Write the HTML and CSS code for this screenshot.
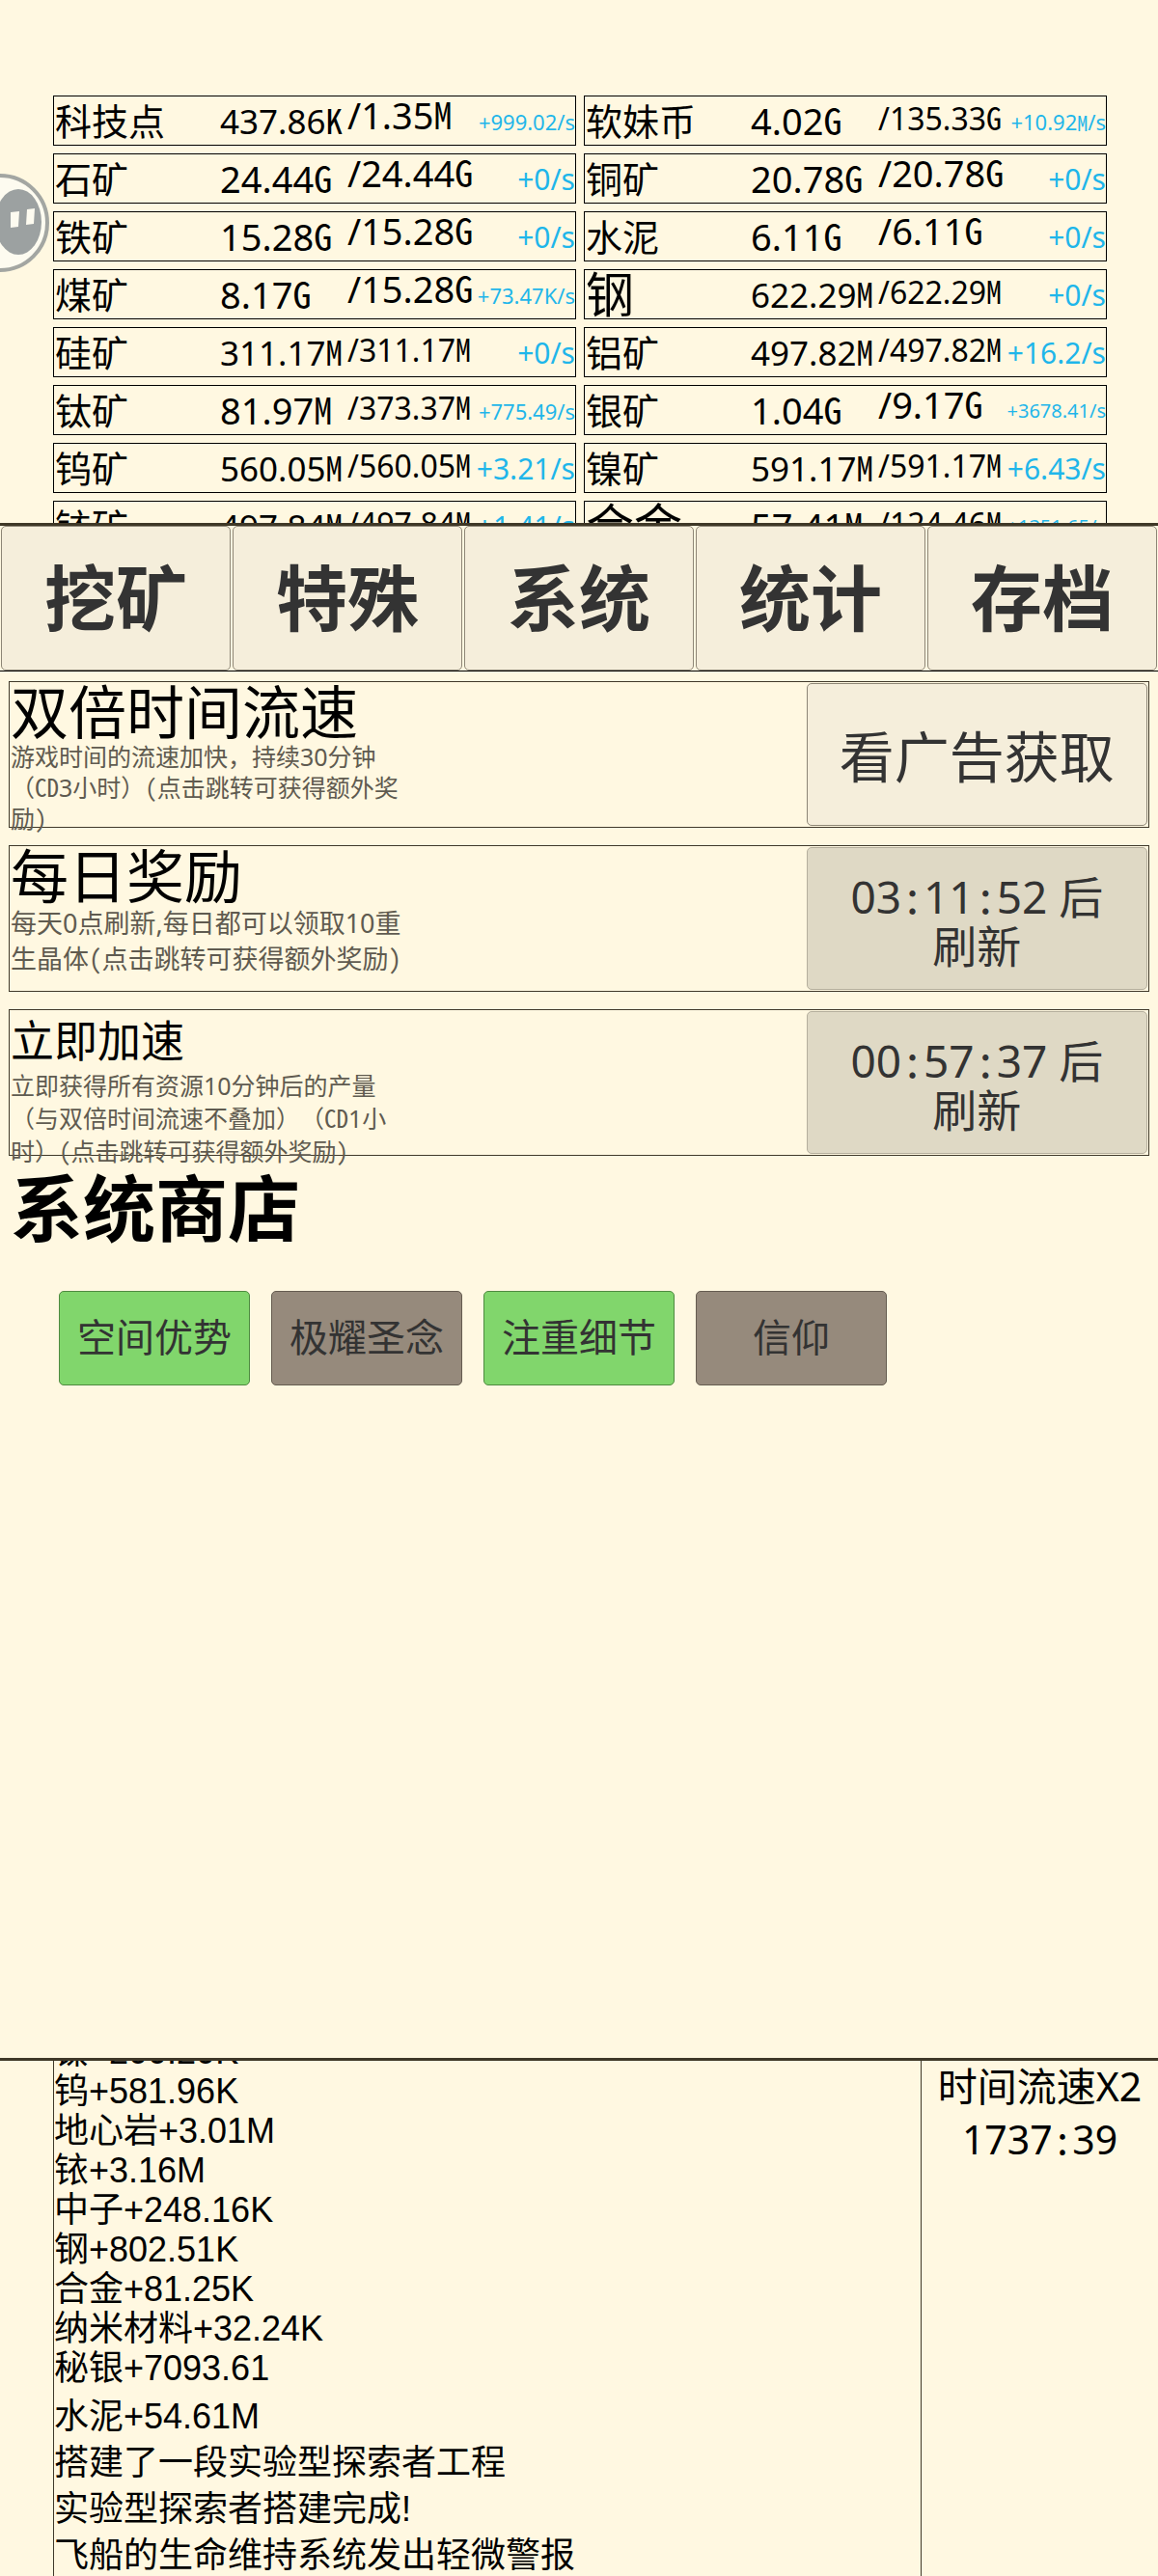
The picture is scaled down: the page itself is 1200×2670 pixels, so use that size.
FILE: index.html
```html
<!DOCTYPE html>
<html lang="zh-CN">
<head>
<meta charset="UTF-8">
<meta name="viewport" content="width=device-width, initial-scale=1">
<title>挖矿</title>
<link rel="stylesheet" href="styles.css">
</head>
<body>

<!-- 资源列表 -->
<section class="resources">
<div class="res-grid">
<div class="res"><span class="name">科技点</span><span class="val long">437.86<i>K</i></span><span class="cap">/1.35<i>M</i></span><span class="rate s">+999.02/s</span></div>
<div class="res"><span class="name">软妹币</span><span class="val">4.02<i>G</i></span><span class="cap long">/135.33<i>G</i></span><span class="rate s">+10.92<i>M</i>/s</span></div>
<div class="res"><span class="name">石矿</span><span class="val">24.44<i>G</i></span><span class="cap">/24.44<i>G</i></span><span class="rate">+0/s</span></div>
<div class="res"><span class="name">铜矿</span><span class="val">20.78<i>G</i></span><span class="cap">/20.78<i>G</i></span><span class="rate">+0/s</span></div>
<div class="res"><span class="name">铁矿</span><span class="val">15.28<i>G</i></span><span class="cap">/15.28<i>G</i></span><span class="rate">+0/s</span></div>
<div class="res"><span class="name">水泥</span><span class="val">6.11<i>G</i></span><span class="cap">/6.11<i>G</i></span><span class="rate">+0/s</span></div>
<div class="res"><span class="name">煤矿</span><span class="val">8.17<i>G</i></span><span class="cap">/15.28<i>G</i></span><span class="rate s">+73.47K/s</span></div>
<div class="res"><span class="name big">钢</span><span class="val long">622.29<i>M</i></span><span class="cap long">/622.29<i>M</i></span><span class="rate">+0/s</span></div>
<div class="res"><span class="name">硅矿</span><span class="val long">311.17<i>M</i></span><span class="cap long">/311.17<i>M</i></span><span class="rate">+0/s</span></div>
<div class="res"><span class="name">铝矿</span><span class="val long">497.82<i>M</i></span><span class="cap long">/497.82<i>M</i></span><span class="rate">+16.2/s</span></div>
<div class="res"><span class="name">钛矿</span><span class="val">81.97<i>M</i></span><span class="cap long">/373.37<i>M</i></span><span class="rate s">+775.49/s</span></div>
<div class="res"><span class="name">银矿</span><span class="val">1.04<i>G</i></span><span class="cap">/9.17<i>G</i></span><span class="rate xs">+3678.41/s</span></div>
<div class="res"><span class="name">钨矿</span><span class="val long">560.05<i>M</i></span><span class="cap long">/560.05<i>M</i></span><span class="rate">+3.21/s</span></div>
<div class="res"><span class="name">镍矿</span><span class="val long">591.17<i>M</i></span><span class="cap long">/591.17<i>M</i></span><span class="rate">+6.43/s</span></div>
<div class="res"><span class="name">铱矿</span><span class="val long">497.84<i>M</i></span><span class="cap long">/497.84<i>M</i></span><span class="rate">+1.41/s</span></div>
<div class="res"><span class="name big">合金</span><span class="val">57.41<i>M</i></span><span class="cap long">/124.46<i>M</i></span><span class="rate xs">+1351.65/s</span></div>
</div>
</section>

<button class="float-ball" aria-label="悬浮球">
<svg viewBox="0 0 102 102" width="102" height="102">
<circle cx="51" cy="51" r="49" fill="#fdfbf0" stroke="#a3a6a2" stroke-width="4"/>
<ellipse cx="70" cy="50" rx="24" ry="34" fill="#9ca1a1"/>
<path d="M62 40l9-1-1 16-8 1zM79 37l8-1-1 16-8 1z" fill="#fdfbf0"/>
</svg>
</button>

<!-- 导航 -->
<nav class="tabs">
<button>挖矿</button>
<button>特殊</button>
<button>系统</button>
<button>统计</button>
<button>存档</button>
</nav>

<!-- 系统页 -->
<main>
<div class="card">
<div class="info">
<h2>双倍时间流速</h2>
<p>游戏时间的流速加快，持续30分钟<br>（<i>CD</i>3小时）<i>(</i>点击跳转可获得额外奖<br>励<i>)</i></p>
</div>
<button class="ad">看广告获取</button>
</div>
<div class="card daily">
<div class="info">
<h2>每日奖励</h2>
<p>每天0点刷新,每日都可以领取10重<br>生晶体<i>(</i>点击跳转可获得额外奖励<i>)</i></p>
</div>
<button disabled>03<i>:</i>11<i>:</i>52 后<br>刷新</button>
</div>
<div class="card boost">
<div class="info">
<h2>立即加速</h2>
<p>立即获得所有资源10分钟后的产量<br>（与双倍时间流速不叠加）（<i>CD</i>1小<br>时）<i>(</i>点击跳转可获得额外奖励<i>)</i></p>
</div>
<button disabled>00<i>:</i>57<i>:</i>37 后<br>刷新</button>
</div>

<h1>系统商店</h1>
<div class="shop">
<button class="on">空间优势</button>
<button>极耀圣念</button>
<button class="on">注重细节</button>
<button>信仰</button>
</div>
</main>

<!-- 日志 -->
<footer>
<div class="log">
<ul>
<li>镍+200.20K</li>
<li>钨+581.96K</li>
<li>地心岩+3.01M</li>
<li>铱+3.16M</li>
<li>中子+248.16K</li>
<li>钢+802.51K</li>
<li>合金+81.25K</li>
<li>纳米材料+32.24K</li>
<li>秘银+7093.61</li>
</ul>
<ul class="msg">
<li>水泥+54.61M</li>
<li>搭建了一段实验型探索者工程</li>
<li>实验型探索者搭建完成!</li>
<li>飞船的生命维持系统发出轻微警报</li>
</ul>
</div>
<div class="speed">
<p>时间流速X2</p>
<p>1737<i>:</i>39</p>
</div>
</footer>

</body>
</html>
```
FILE: styles.css
```css
* { box-sizing:border-box; margin:0; padding:0; }
body { height:100vh; display:flex; flex-direction:column; overflow:hidden; background:#fff8e1; color:#000; font-family:'Noto Sans','Noto Sans CJK SC',sans-serif; text-spacing-trim:space-all; }
button { font-family:inherit; color:#333; background:#f5eedb; border:1px solid #8d8676; border-radius:5px; cursor:pointer; }

/* 等宽的单位和冒号 */
i { font-family:'Noto Sans Mono CJK SC','Liberation Mono',monospace; font-style:normal; }

/* 资源 */
.resources { height:20.3vh; flex:none; padding:99px 53px 0 55px; overflow:hidden; }
.res-grid { display:grid; grid-template-columns:1fr 1fr; gap:8px; }
.res { height:52px; border:1px solid #000; display:grid; grid-template-columns:172fr 132fr 130fr 106fr; white-space:nowrap; line-height:50px; }
.res span { min-width:0; }
.name { font-size:38px; padding-left:1px; }
.name.big { font-size:50px; }
.val { font-size:38px; line-height:48px; }
.val.long { font-size:35px; }
.cap { font-size:38px; line-height:36px; }
.cap.long { font-size:32px; line-height:42px; }
.rate { font-size:30px; line-height:52px; color:#1fb6ea; display:flex; justify-content:flex-end; }
.rate.s { font-size:22px; }
.rate.xs { font-size:20px; }

.float-ball { position:absolute; left:-51px; top:180px; width:102px; height:102px; border:none; border-radius:50%; background:none; }
.float-ball svg { display:block; }

/* 导航 */
.tabs { display:flex; flex:none; border-top:3px solid #3f3827; border-bottom:1px solid #000; }
.tabs button { flex:1; height:150px; margin:0 1px; font-size:74px; line-height:76px; font-weight:bold; }

/* 系统页 */
main { flex:1; min-height:0; padding:10px 9px; overflow:hidden; }
.card { display:flex; justify-content:space-between; height:152px; margin-bottom:18px; padding:1px; border:1px solid #40392a; }
.info { white-space:nowrap; }
.card h2 { font-size:60px; font-weight:normal; line-height:61px; }
.card p { font-size:25px; line-height:31px; color:#5f5b50; }
.card button { width:30%; padding-top:4px; font-size:46px; line-height:51px; }
.card .ad { font-size:57px; }
.card button:disabled { background:#dfd9c5; border-color:#b5af9d; }
.daily p { font-size:27px; line-height:36px; }
.boost h2 { font-size:45px; }
.boost p { line-height:33px; }

h1 { font-size:75px; line-height:72px; padding-left:2px; }
.shop { display:flex; gap:22px; padding:50px 52px; }
.shop button { width:198px; height:98px; padding-bottom:6px; font-size:40px; background:#968a7c; border-color:#655c50; }
.shop .on { background:#81d66c; border-color:#4e8a40; }

/* 日志 */
footer { display:flex; flex:none; height:calc(20vh + 3px); border-top:3px solid #3f3827; }
.log { flex:1; display:flex; flex-direction:column; justify-content:flex-end; gap:6px; overflow:hidden; margin-left:55px; border-left:1px solid #40392a; border-right:1px solid #40392a; font-family:'Liberation Sans','Noto Sans CJK SC',sans-serif; font-size:36px; line-height:41px; }
.log ul { list-style:none; }
.log li { height:41px; white-space:nowrap; }
.log .msg { margin-bottom:-3px; line-height:48px; }
.log .msg li { height:48px; }
.speed { width:245px; font-size:41px; line-height:53px; text-align:center; }
```
